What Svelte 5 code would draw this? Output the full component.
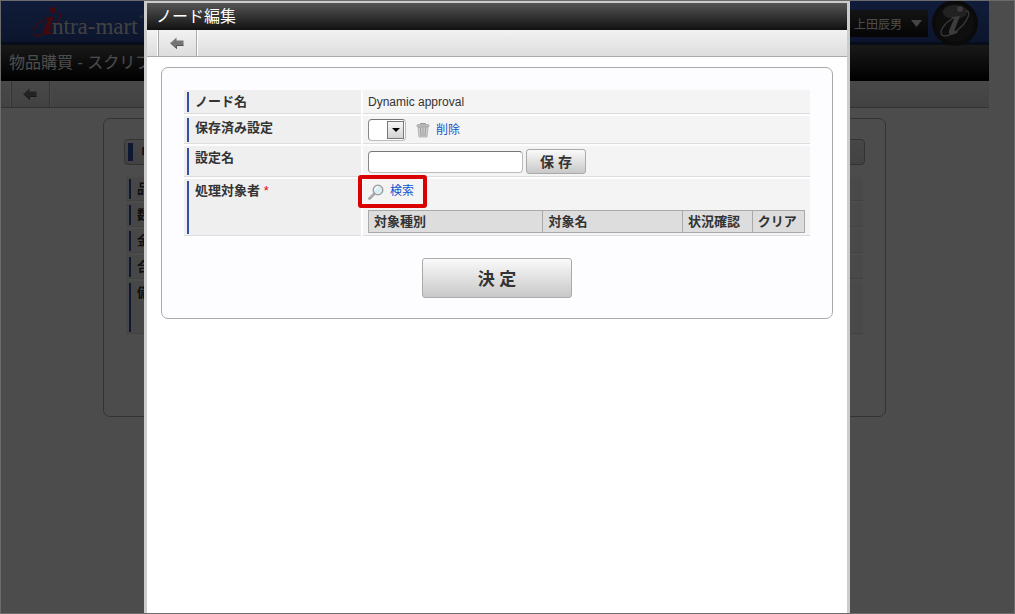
<script>
  // Columns of the target user table
  const columns = [
    { name: "対象種別", width: "40%" },
    { name: "対象名", width: "32%" },
    { name: "状況確認", width: "16%" },
    { name: "クリア", width: "12%" },
  ];

  // Labels of the application form behind the dialog
  const pageRows = ["品名", "数量", "金額", "合計", "備考"];

  let settingName = $state("");
  let savedSetting = $state("");
</script>

{#snippet backArrow()}
  <svg width="14" height="12" viewBox="0 0 14 12" aria-hidden="true">
    <path d="M0.5 6 6.5 0.5V3.5H13.5V8.5H6.5V11.5Z" fill="#757575" />
    <path d="M0.5 6 6.5 11.5V8.5H13.5" fill="none" stroke="#555" />
  </svg>
{/snippet}

<div class="screen">
  <!-- Application page -->
  <div class="page">
    <header class="brand-bar">
      <svg class="logo" width="120" height="38" viewBox="0 0 120 38" role="img" aria-label="intra-mart">
        <path d="M12 16C4 20-2 28 1 31.5C4 34.5 13 31 20 24C27 17 30 10 25 9.5" fill="none" stroke="#e81c28" stroke-width="1.2" />
        <path d="M13 14.5 21 13.5 15.5 27Q14.5 30 19.5 28.5L19 30Q10 34 10.5 28.5Q11 26 15 16.5L13 16Z" fill="#e81c28" />
        <circle cx="20" cy="7" r="3" fill="#e81c28" />
        <text x="19" y="31" font-size="23">ntra-mart</text>
        <text x="106" y="16" font-size="6">®</text>
      </svg>
      <button type="button" class="user">上田辰男
        <svg width="11" height="7" viewBox="0 0 11 7" aria-hidden="true"><path d="M0 0H11L5.5 7Z" fill="#e8e8e8" /></svg>
      </button>
      <svg class="emblem" width="48" height="48" viewBox="0 0 48 48" aria-hidden="true">
        <circle cx="24" cy="24" r="23" fill="#242424" />
        <circle cx="24" cy="24" r="19" fill="#303030" />
        <ellipse cx="24" cy="13" rx="12" ry="7" fill="#707070" />
        <path d="M21 20C13 24 8 33 11 36C15 39 25 34 32 26C38 18 40 12 35 12" fill="none" stroke="#b8b8b8" stroke-width="1.3" />
        <path d="M21 18 29 17 23.5 31Q22.5 34 27 32L26 34Q17 38 18 32Q19 29 23 20L21 19.5Z" fill="#c8c8c8" />
        <circle cx="29" cy="10" r="2.8" fill="#c8c8c8" />
      </svg>
    </header>
    <h1 class="page-title">物品購買 - スクリプト開発</h1>
    <nav class="toolbar page-toolbar">
      <button type="button" class="back" aria-label="戻る">{@render backArrow()}</button>
    </nav>
    <div class="page-card">
      <h2 class="section">申請情報</h2>
      {#each pageRows as label, i}
        <div class="row" class:tall={i === pageRows.length - 1}>
          <div class="label">{label}</div>
          <div class="value"></div>
        </div>
      {/each}
    </div>
  </div>

  <!-- Dialog over the shaded page -->
  <div class="overlay">
    <div class="dialog" role="dialog" aria-labelledby="dialog-title">
      <h1 class="dialog-title" id="dialog-title">ノード編集</h1>
      <nav class="toolbar">
        <button type="button" class="back" aria-label="戻る">{@render backArrow()}</button>
      </nav>

      <form class="card" onsubmit={(e) => e.preventDefault()}>
        <div class="row">
          <div class="label">ノード名</div>
          <div class="value">Dynamic approval</div>
        </div>
        <div class="row">
          <label class="label" for="saved">保存済み設定</label>
          <div class="value">
            <span class="select">
              <select id="saved" bind:value={savedSetting}><option value=""></option></select>
              <span class="drop"></span>
            </span>
            <a class="delete" href="#delete">
              <svg width="14" height="16" viewBox="0 0 14 16" aria-hidden="true">
                <path d="M4.5 2.5V1.5H9.5V2.5" fill="none" stroke="#999" />
                <rect x="1" y="2.5" width="12" height="2.5" rx="1" fill="#bbb" stroke="#999" stroke-width=".6" />
                <path d="M2 5.5H12L11 15H3Z" fill="#d0d0d0" stroke="#aaa" stroke-width=".8" />
                <path d="M4.5 6 5 14M7 6V14M9.5 6 9 14" stroke="#999" />
              </svg>
              削除
            </a>
          </div>
        </div>
        <div class="row">
          <label class="label" for="name">設定名</label>
          <div class="value">
            <input id="name" type="text" bind:value={settingName} />
            <button type="button" class="button">保 存</button>
          </div>
        </div>
        <div class="row">
          <div class="label">処理対象者 <span class="required">*</span></div>
          <div class="value targets">
            <a class="search" href="#search">
              <svg width="16" height="16" viewBox="0 0 16 16" aria-hidden="true">
                <path d="M1.5 14.5 6 10" stroke="#999" stroke-width="2.5" stroke-linecap="round" />
                <path d="M1.5 14 6 9.5" stroke="#ccc" />
                <circle cx="10" cy="6" r="4.8" fill="#d8edf6" stroke="#999" stroke-width="1.3" />
                <path d="M7 6Q7 3.5 10 3" fill="none" stroke="#fff" stroke-width="1.3" />
              </svg>
              検索
            </a>
            <table>
              <thead>
                <tr>
                  {#each columns as column}
                    <th style="width: {column.width}">{column.name}</th>
                  {/each}
                </tr>
              </thead>
            </table>
          </div>
        </div>
        <button type="submit" class="button submit">決 定</button>
      </form>
    </div>
  </div>
</div>

<style>
  :global(body) {
    background: #fff;
  }

  .screen {
    display: grid;
    min-height: 100vh;
    box-sizing: border-box;
    border: 1px solid #6b6b6b;
    overflow: hidden;
    color: #333;
    font-family: "Liberation Sans", "Noto Sans CJK JP", sans-serif;
    font-size: 12px;
    line-height: 17px;
  }

  .screen > * {
    grid-area: 1 / 1;
    min-width: 0;
  }

  h1,
  h2 {
    margin: 0;
  }

  button,
  input,
  select {
    font-family: inherit;
    color: inherit;
    box-sizing: border-box;
  }

  /* Page behind the dialog */
  .page {
    padding-right: 25px;
  }

  .brand-bar {
    position: relative;
    display: flex;
    justify-content: space-between;
    align-items: flex-start;
    height: 44px;
    box-sizing: border-box;
    padding: 0 61px 0 32px;
    border-bottom: 3px solid #1b2c58;
    background: linear-gradient(#345fc0, #2c4898);
  }

  .logo {
    margin-top: 2px;
    fill: #ddd;
    font-family: "Liberation Serif", serif;
  }

  .user {
    display: flex;
    align-items: center;
    gap: 9px;
    height: 27px;
    margin-top: 9px;
    padding: 0 6px 0 12px;
    border: 0;
    background: linear-gradient(#444, #111);
    color: #fff;
    font-size: 12px;
  }

  .emblem {
    position: absolute;
    top: -2px;
    right: 10px;
  }

  .page-title {
    padding: 0 8px;
    background: linear-gradient(#555, #000);
    color: #fff;
    font-size: 16px;
    font-weight: normal;
    line-height: 36px;
  }

  .toolbar {
    display: flex;
    height: 26px;
    padding-left: 11px;
    border-bottom: 1px solid #aaa;
    background: linear-gradient(#f2f2f2, #ddd);
  }

  .page-toolbar {
    padding-left: 10px;
  }

  .back {
    display: flex;
    align-items: center;
    justify-content: center;
    width: 39px;
    padding: 0 2px 1px 0;
    border: solid #aaa;
    border-width: 0 1px;
    background: none;
    box-shadow: 1px 0 #fff, -1px 0 #fff;
  }

  .page-card {
    margin: 10px 103px 0 102px;
    height: 257px;
    padding: 20px 22px;
    border: 1px solid #aaa;
    border-radius: 7px;
  }

  .section {
    margin: 0 -2px 12px;
    padding: 3px 0 3px 16px;
    border: 1px solid #aaa;
    border-radius: 4px;
    background: linear-gradient(90deg, transparent 3px, #3350a8 3px 8px, transparent 8px) 0 3px / 100% 18px no-repeat, linear-gradient(#eee, #ddd);
    font-size: 13px;
    line-height: 18px;
  }

  /* Form rows */
  .row {
    display: grid;
    grid-template-columns: 177px minmax(0, 1fr);
    gap: 2px;
    margin-bottom: 2px;
  }

  .row.tall {
    min-height: 53px;
  }

  .label {
    padding: 3px 0 3px 11px;
    border-bottom: 1px solid #ddd;
    background: linear-gradient(90deg, transparent 3px, #3350a8 3px 5px, transparent 5px) 0 2px / 100% calc(100% - 3px) no-repeat #efefef;
    font-size: 13px;
    font-weight: bold;
  }

  .required {
    color: #e00;
    font-weight: normal;
  }

  .value {
    display: flex;
    align-items: center;
    gap: 3px;
    padding: 3px 5px 2px;
    border-bottom: 1px solid #ddd;
    background: #f4f4f4;
  }

  /* Dialog */
  .overlay {
    position: relative;
    display: flex;
    justify-content: center;
    padding-right: 21px;
    background: rgba(0, 0, 0, 0.7);
  }

  .dialog {
    flex: 1;
    max-width: 700px;
    border: solid #ccc;
    border-width: 2px 3px 0;
    background: #fff;
  }

  .dialog-title {
    padding: 0 9px;
    background: linear-gradient(#555, #111);
    color: #fff;
    font-size: 16px;
    font-weight: normal;
    line-height: 27px;
  }

  .card {
    margin: 10px 14px;
    padding: 22px 22px 20px;
    border: 1px solid #aaa;
    border-radius: 7px;
    background: #fdfdff;
  }

  a {
    display: flex;
    align-items: center;
    color: #15c;
    text-decoration: none;
  }

  .select {
    position: relative;
    display: flex;
  }

  select,
  input {
    height: 22px;
    padding: 0 4px;
    border: 1px solid #bbb;
    border-top-color: #777;
    border-left-color: #888;
    border-radius: 4px;
    background: #fff;
  }

  select {
    width: 38px;
    appearance: none;
  }

  input {
    width: 155px;
  }

  .drop {
    position: absolute;
    top: 2px;
    right: 2px;
    display: grid;
    place-items: center;
    width: 15px;
    height: 16px;
    border: 1px solid #777;
    background: linear-gradient(#f6f6f6, #d4d4d4);
    pointer-events: none;
  }

  .drop::after {
    content: "";
    border: 4px solid transparent;
    border-top-color: #000;
    border-bottom: 0;
  }

  .delete {
    gap: 6px;
    margin-left: 7px;
  }

  .button {
    height: 25px;
    min-width: 60px;
    padding: 0 0 2px;
    border: 1px solid #aaa;
    border-radius: 3px;
    background: linear-gradient(#fafafa, #c8c8c8);
    font-size: 14px;
    font-weight: bold;
  }

  .submit {
    display: block;
    width: 150px;
    height: 40px;
    margin: 22px auto 0;
    font-size: 17px;
  }

  .targets {
    flex-direction: column;
    align-items: stretch;
    gap: 2px;
    padding-top: 0;
  }

  .search {
    align-self: flex-start;
    gap: 6px;
    height: 25px;
    margin: -4px 0 0 -10px;
    padding: 0 9px 0 6px;
    border: 4px solid #d80000;
    border-radius: 3px;
  }

  table {
    width: 100%;
    border-collapse: collapse;
    table-layout: fixed;
  }

  th {
    box-sizing: border-box;
    padding: 2px 5px;
    border: 1px solid #aaa;
    background: #ddd;
    font-size: 13px;
    text-align: left;
    white-space: nowrap;
  }
</style>
